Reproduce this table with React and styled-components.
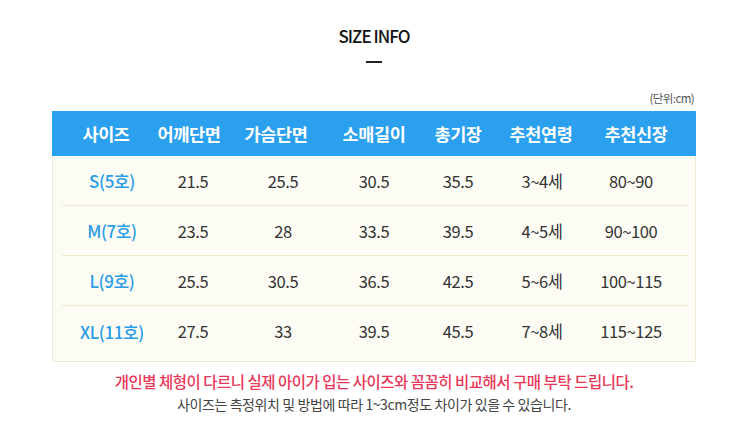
import styled, { createGlobalStyle } from 'styled-components';

const GlobalStyle = createGlobalStyle`
  body {
    margin: 0;
    background: #fff;
    font-family: 'Noto Sans CJK KR', 'Noto Sans', sans-serif;
  }
`;

const Page = styled.div`
  width: 750px;
  padding: 26px 54px 0 52px;
  box-sizing: border-box;
`;

const Title = styled.h2`
  margin: 0;
  text-align: center;
  font-size: 17px;
  line-height: 20px;
  font-weight: 500;
  letter-spacing: -1px;
  color: #111;
`;

const Dash = styled.div`
  width: 16px;
  height: 2px;
  margin: 15px auto 0;
  background: #222;
`;

const Unit = styled.div`
  margin: 28px 2px 6px 0;
  text-align: right;
  font-size: 11.5px;
  line-height: 14px;
  letter-spacing: -0.6px;
  color: #555;
`;

const Table = styled.div`
  border: 1px solid #eee8d2;
  border-top: none;
  background: #fdfcf4;
`;

const HeadRow = styled.div`
  display: grid;
  grid-template-columns: 98px 78px 96px 100px 68px 98px 92px 1fr;
  height: 45px;
  align-items: center;
  margin: 0 -1px;
  background: #2aa0ee;
`;

const HeadCell = styled.div`
  text-align: center;
  color: #fff;
  font-size: 17.5px;
  font-weight: 700;
  letter-spacing: -0.4px;
  white-space: nowrap;
  padding-left: ${(p) => (p.first ? '10px' : '0')};
`;

const Body = styled.div`
  padding: 0 7px 5px 9px;
`;

const Row = styled.div`
  display: grid;
  grid-template-columns: 100px 62px 118px 64px 104px 64px 114px;
  box-sizing: border-box;
  height: 50px;
  align-items: center;
  border-bottom: ${(p) => (p.last ? 'none' : '1px solid #efe8cb')};
`;

const Cell = styled.div`
  text-align: center;
  white-space: nowrap;
  font-size: ${(p) => (p.size ? '17px' : '16.5px')};
  letter-spacing: -0.4px;
  color: ${(p) => (p.size ? '#2a9de8' : '#333')};
  font-weight: ${(p) => (p.size ? 500 : 400)};
`;

const Notice = styled.p`
  margin: 9px 0 0;
  text-align: center;
  font-size: 15.5px;
  line-height: 20px;
  font-weight: 500;
  letter-spacing: -0.5px;
  color: #e8385a;
`;

const SubNotice = styled.p`
  margin: 4px 0 0;
  text-align: center;
  font-size: 14px;
  line-height: 18px;
  letter-spacing: -0.4px;
  color: #444;
`;

const headers = ['사이즈', '어깨단면', '가슴단면', '소매길이', '총기장', '추천연령', '추천신장'];

const rows = [
  ['S(5호)', '21.5', '25.5', '30.5', '35.5', '3~4세', '80~90'],
  ['M(7호)', '23.5', '28', '33.5', '39.5', '4~5세', '90~100'],
  ['L(9호)', '25.5', '30.5', '36.5', '42.5', '5~6세', '100~115'],
  ['XL(11호)', '27.5', '33', '39.5', '45.5', '7~8세', '115~125'],
];

export default function App() {
  return (
    <>
      <GlobalStyle />
      <Page>
        <Title>SIZE INFO</Title>
        <Dash />
        <Unit>(단위:cm)</Unit>
        <Table>
          <HeadRow>
            {headers.map((h, i) => (
              <HeadCell key={h} first={i === 0}>{h}</HeadCell>
            ))}
          </HeadRow>
          <Body>
            {rows.map((r, ri) => (
              <Row key={r[0]} last={ri === rows.length - 1}>
                {r.map((v, i) => (
                  <Cell key={i} size={i === 0}>{v}</Cell>
                ))}
              </Row>
            ))}
          </Body>
        </Table>
        <Notice>개인별 체형이 다르니 실제 아이가 입는 사이즈와 꼼꼼히 비교해서 구매 부탁 드립니다.</Notice>
        <SubNotice>사이즈는 측정위치 및 방법에 따라 1~3cm정도 차이가 있을 수 있습니다.</SubNotice>
      </Page>
    </>
  );
}
